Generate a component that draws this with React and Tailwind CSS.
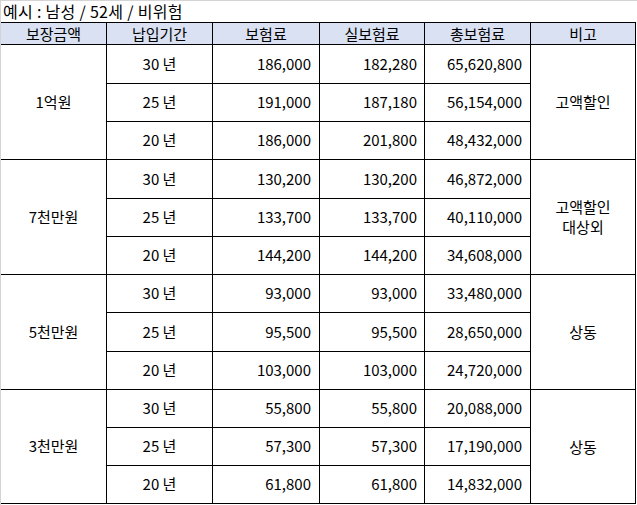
import React from "react";

const groups = [
  { amount: "1억원", note: ["고액할인"], span: "row-start-2 row-span-3", rows: ["row-start-2", "row-start-3", "row-start-4"], data: [["30 년", "186,000", "182,280", "65,620,800"], ["25 년", "191,000", "187,180", "56,154,000"], ["20 년", "186,000", "201,800", "48,432,000"]] },
  { amount: "7천만원", note: ["고액할인", "대상외"], span: "row-start-5 row-span-3", rows: ["row-start-5", "row-start-6", "row-start-7"], data: [["30 년", "130,200", "130,200", "46,872,000"], ["25 년", "133,700", "133,700", "40,110,000"], ["20 년", "144,200", "144,200", "34,608,000"]] },
  { amount: "5천만원", note: ["상동"], span: "row-start-8 row-span-3", rows: ["row-start-8", "row-start-9", "row-start-10"], data: [["30 년", "93,000", "93,000", "33,480,000"], ["25 년", "95,500", "95,500", "28,650,000"], ["20 년", "103,000", "103,000", "24,720,000"]] },
  { amount: "3천만원", note: ["상동"], span: "row-start-11 row-span-3", rows: ["row-start-11", "row-start-12", "row-start-13"], data: [["30 년", "55,800", "55,800", "20,088,000"], ["25 년", "57,300", "57,300", "17,190,000"], ["20 년", "61,800", "61,800", "14,832,000"]] },
];

const headers = ["보장금액", "납입기간", "보험료", "실보험료", "총보험료", "비고"];

function Cell({ className, children }) {
  return <div className={`bg-white flex items-center ${className}`}>{children}</div>;
}

export default function App() {
  return (
    <div className="w-[637px] h-[505px] bg-white border-t border-l border-[#d4d4d4] text-black text-[15px] overflow-hidden font-['Noto_Sans_CJK_KR','Noto_Sans',sans-serif]">
      <div className="h-[21px] pl-[2px] leading-[21px] text-[16px] tracking-[0.3px]">예시 : 남성 / 52세 / 비위험</div>
      <div className="grid w-[635px] bg-black gap-px pt-px pr-px pb-px grid-cols-[105px_105px_106px_104px_105px_104px] grid-rows-[21px_38px_37px_37px_38px_37px_37px_37px_38px_37px_37px_37px_37px]">
        {headers.map((h) => (
          <div key={h} className="row-start-1 bg-[#d9e1f2] flex items-center justify-center leading-none">
            {h}
          </div>
        ))}
        {groups.map((g) => (
          <React.Fragment key={g.amount + g.span}>
            <Cell className={`col-start-1 justify-center ${g.span}`}>{g.amount}</Cell>
            {g.data.map((row, ri) => (
              <React.Fragment key={ri}>
                <Cell className={`col-start-2 justify-center ${g.rows[ri]}`}>{row[0]}</Cell>
                <Cell className={`col-start-3 justify-end pr-[8px] ${g.rows[ri]}`}>{row[1]}</Cell>
                <Cell className={`col-start-4 justify-end pr-[7px] ${g.rows[ri]}`}>{row[2]}</Cell>
                <Cell className={`col-start-5 justify-end pr-[8px] ${g.rows[ri]}`}>{row[3]}</Cell>
              </React.Fragment>
            ))}
            <Cell className={`col-start-6 flex-col justify-center leading-[20px] ${g.span}`}>
              {g.note.map((n) => (
                <span key={n}>{n}</span>
              ))}
            </Cell>
          </React.Fragment>
        ))}
      </div>
    </div>
  );
}
